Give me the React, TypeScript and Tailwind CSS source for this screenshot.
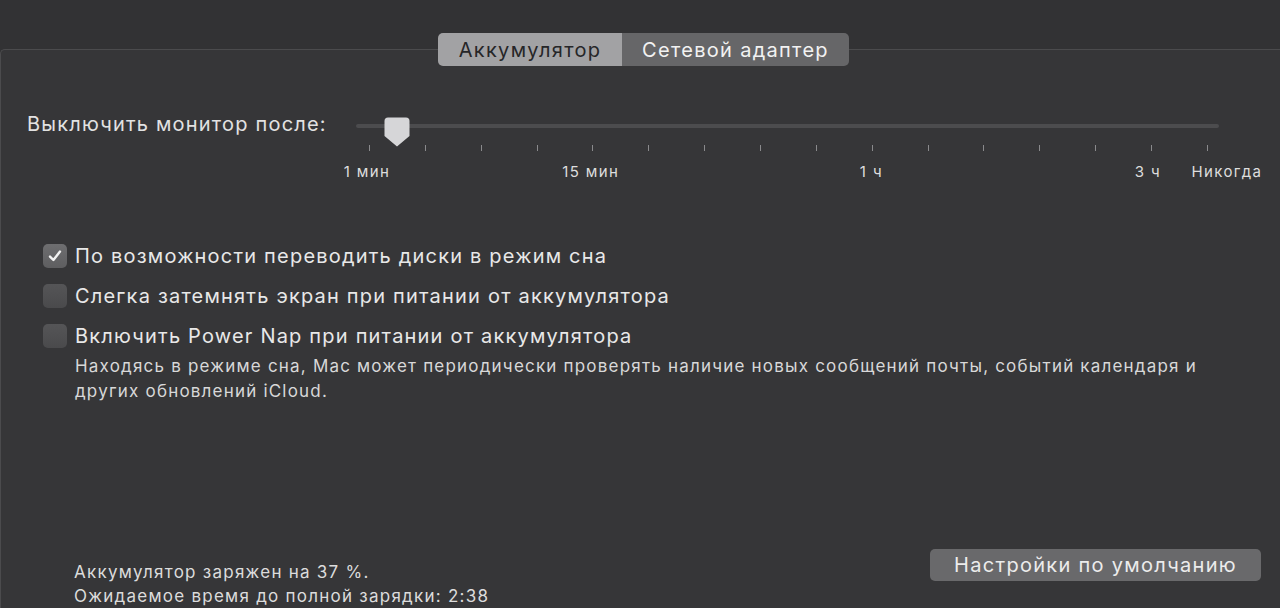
import React from "react"

const TICKS = 16
const TICK_GAP = 55.93

const labels = [
  { text: "1 мин", tick: 0, shift: -2 },
  { text: "15 мин", tick: 4, shift: -2 },
  { text: "1 ч", tick: 9, shift: -1 },
  { text: "3 ч", tick: 14, shift: -4 },
  { text: "Никогда", tick: 15, shift: 19 },
]

function Checkbox({ checked }: { checked?: boolean }) {
  return (
    <div
      className={
        checked
          ? "w-[24px] h-[24px] rounded-[5px] bg-gradient-to-b from-[#6e6e70] to-[#5e5e60] flex items-center justify-center shrink-0"
          : "w-[24px] h-[24px] rounded-[5px] bg-gradient-to-b from-[#555557] to-[#4a4a4c] shrink-0"
      }
    >
      {checked && (
        <svg width="16" height="16" viewBox="0 0 16 16">
          <path d="M3 8.6 L6.4 12 L13 3.6" fill="none" stroke="#f2f2f2" strokeWidth="2.4" strokeLinecap="round" strokeLinejoin="round" />
        </svg>
      )}
    </div>
  )
}

export default function App() {
  return (
    <div className="w-[1280px] h-[608px] bg-[#323234] overflow-hidden pt-[49px] font-['Inter','Liberation_Sans',sans-serif] text-[#e4e4e4]">
      <div className="h-full flex flex-col border-l border-t border-[#4b4b4d] rounded-tl-[5px] bg-[#363638]">
        {/* tabs */}
        <div className="flex justify-center -mt-[17px] pl-[6px]">
          <div className="flex h-[33px] rounded-[5px] overflow-hidden text-[20px] tracking-[1.3px]">
            <div className="w-[184px] bg-[#a2a2a4] text-[#262628] flex items-center justify-center">Аккумулятор</div>
            <div className="w-[227px] bg-[#666668] text-[#f2f2f2] flex items-center justify-center">Сетевой адаптер</div>
          </div>
        </div>

        {/* slider */}
        <div className="flex mt-[42px]">
          <div className="w-[355px] pl-[26px] text-[20px] leading-[32px] tracking-[1.2px] text-[#e2e2e2] whitespace-nowrap">Выключить монитор после:</div>
          <div className="relative w-[863px] h-[80px]">
            <div className="absolute left-0 right-0 top-[16px] h-[4px] rounded-full bg-[#4c4c4e]" />
            <div className="absolute left-[13px] top-[37px] w-[839px] h-[6px] flex justify-between">
              {Array.from({ length: TICKS }).map((_, i) => (
                <div key={i} className="w-[1px] h-[6px] bg-[#8a8a8c]" />
              ))}
            </div>
            <svg className="absolute left-[28px] top-[9px]" width="26" height="30" viewBox="0 0 26 30">
              <path d="M4 0.5 H22 A3.5 3.5 0 0 1 25.5 4 V19 L13 29.5 L0.5 19 V4 A3.5 3.5 0 0 1 4 0.5 Z" fill="#d6d6d8" />
            </svg>
            {labels.map((l) => (
              <span
                key={l.text}
                className="absolute top-[55px] -translate-x-1/2 whitespace-nowrap text-[15px] leading-[18px] tracking-[1.4px] text-[#dedede]"
                style={{ left: 13 + l.tick * TICK_GAP + l.shift }}
              >
                {l.text}
              </span>
            ))}
          </div>
        </div>

        {/* checkboxes */}
        <div className="mt-[56px] pl-[42px] flex flex-col gap-[16px] text-[20px] tracking-[1.2px] text-[#e8e8e8]">
          <div className="flex items-center gap-[8px] h-[24px]">
            <Checkbox checked />
            <span>По возможности переводить диски в режим сна</span>
          </div>
          <div className="flex items-center gap-[8px] h-[24px]">
            <Checkbox />
            <span>Слегка затемнять экран при питании от аккумулятора</span>
          </div>
          <div className="flex items-center gap-[8px] h-[24px]">
            <Checkbox />
            <span>Включить Power Nap при питании от аккумулятора</span>
          </div>
        </div>
        <p className="mt-[6px] pl-[74px] text-[17px] leading-[25px] tracking-[1.2px] text-[#d8d8d8] whitespace-nowrap">
          Находясь в режиме сна, Mac может периодически проверять наличие новых сообщений почты, событий календаря и
          <br />
          других обновлений iCloud.
        </p>

        {/* bottom */}
        <div className="mt-auto flex items-start justify-between pr-[19px]">
          <div className="mt-[11px] pl-[73px] text-[17px] leading-[24px] tracking-[1.25px] text-[#dcdcdc]">
            <div>Аккумулятор заряжен на 37 %.</div>
            <div>Ожидаемое время до полной зарядки: 2:38</div>
          </div>
          <button className="w-[331px] h-[32px] rounded-[5px] bg-[#69696b] text-[20px] tracking-[1.3px] text-[#ececec]">
            Настройки по умолчанию
          </button>
        </div>
      </div>
    </div>
  )
}
